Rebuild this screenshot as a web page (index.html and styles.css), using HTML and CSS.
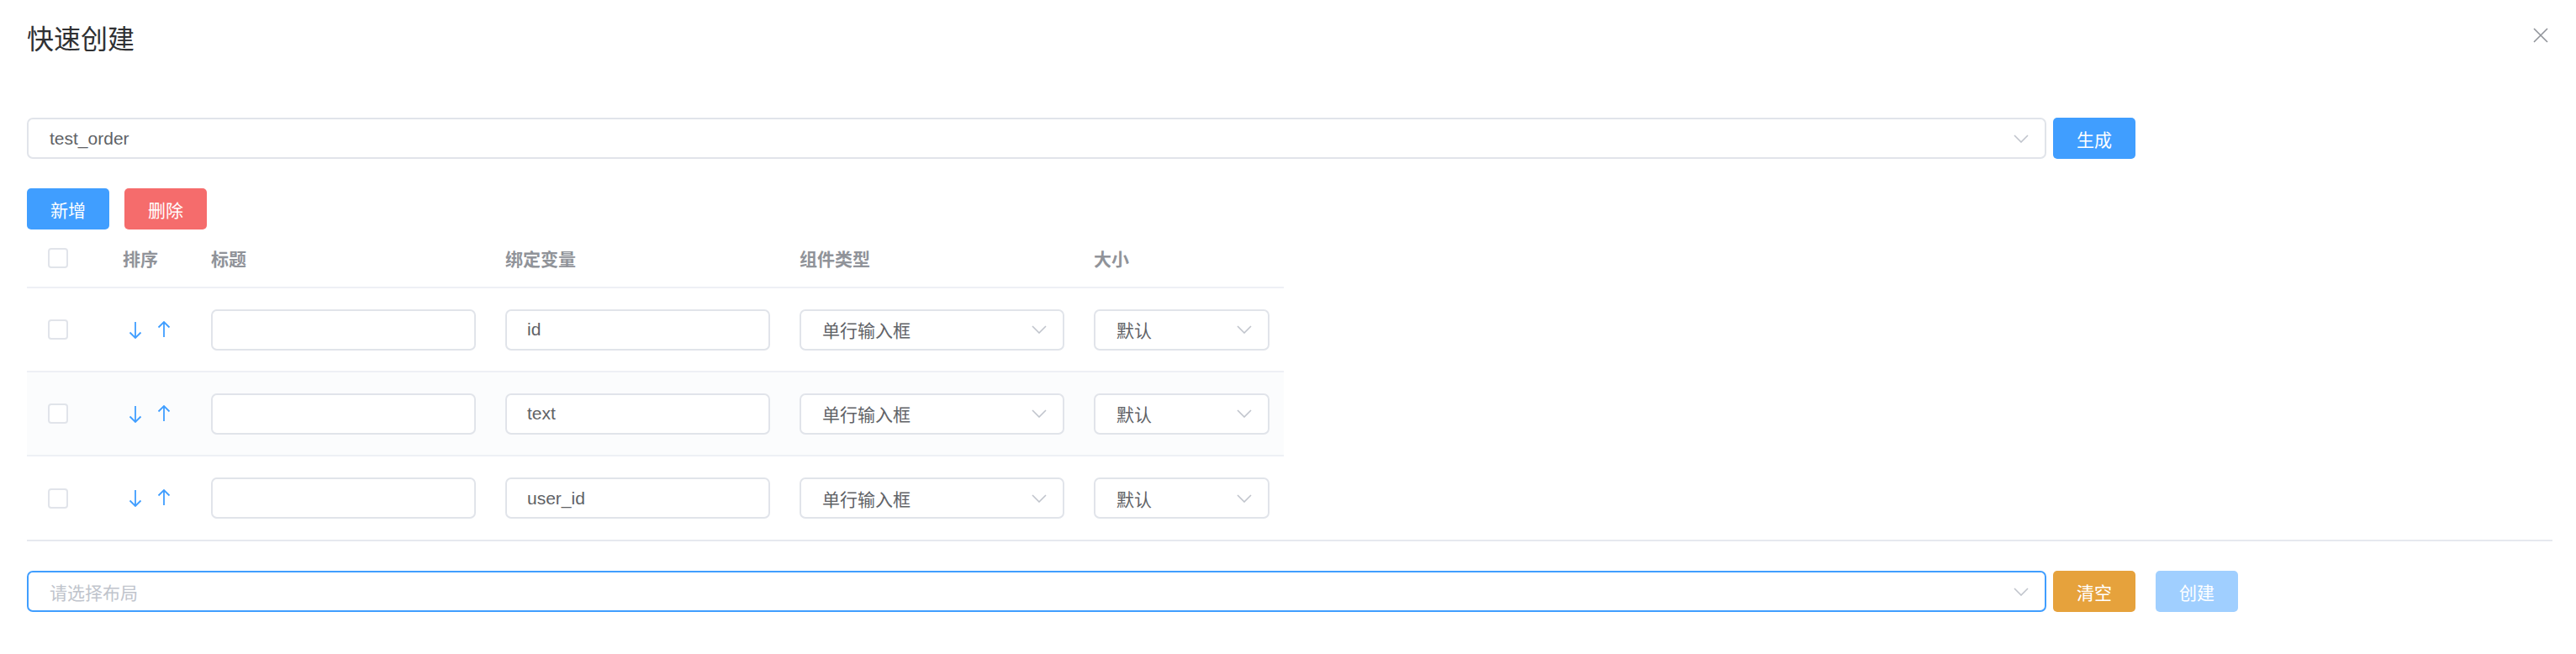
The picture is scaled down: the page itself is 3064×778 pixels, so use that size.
FILE: index.html
```html
<!DOCTYPE html>
<html lang="zh-CN">
<head>
<meta charset="utf-8">
<title>快速创建</title>
<link rel="stylesheet" href="styles.css">
</head>
<body>
<div class="dialog">
  <div class="dialog-header">
    <span class="dialog-title">快速创建</span>
    <button class="dialog-close" aria-label="关闭">
      <svg width="18" height="18" viewBox="0 0 18 18"><path d="M1 1L17 17M17 1L1 17" stroke="#909399" stroke-width="1.6" fill="none"/></svg>
    </button>
  </div>
  <div class="dialog-body">
    <div class="form-row">
      <div class="select select-wide">
        <span class="select-value">test_order</span>
        <svg class="chevron" width="18" height="10" viewBox="0 0 18 10"><path d="M1 1L9 9L17 1" stroke="#c0c4cc" stroke-width="1.6" fill="none"/></svg>
      </div>
      <button class="btn btn-primary btn-gap-s">生成</button>
    </div>

    <div class="toolbar">
      <button class="btn btn-primary">新增</button>
      <button class="btn btn-danger">删除</button>
    </div>

    <div class="grid">
      <div class="grid-row grid-head">
        <div class="cell cell-check"><span class="checkbox"></span></div>
        <div class="cell">排序</div>
        <div class="cell">标题</div>
        <div class="cell">绑定变量</div>
        <div class="cell">组件类型</div>
        <div class="cell">大小</div>
      </div>

      <div class="grid-row">
        <div class="cell cell-check"><span class="checkbox"></span></div>
        <div class="cell cell-sort">
          <svg class="arrow" width="16" height="21" viewBox="0 0 16 21"><path d="M8 1V20M1.5 13.5L8 20L14.5 13.5" stroke="#409eff" stroke-width="1.8" fill="none"/></svg>
          <svg class="arrow" width="16" height="21" viewBox="0 0 16 21"><path d="M8 19V1M1.5 7.5L8 1L14.5 7.5" stroke="#409eff" stroke-width="1.8" fill="none"/></svg>
        </div>
        <div class="cell"><div class="input"></div></div>
        <div class="cell"><div class="input">id</div></div>
        <div class="cell"><div class="select"><span class="select-value">单行输入框</span><svg class="chevron" width="18" height="10" viewBox="0 0 18 10"><path d="M1 1L9 9L17 1" stroke="#c0c4cc" stroke-width="1.6" fill="none"/></svg></div></div>
        <div class="cell"><div class="select select-size"><span class="select-value">默认</span><svg class="chevron" width="18" height="10" viewBox="0 0 18 10"><path d="M1 1L9 9L17 1" stroke="#c0c4cc" stroke-width="1.6" fill="none"/></svg></div></div>
      </div>

      <div class="grid-row grid-row-hover">
        <div class="cell cell-check"><span class="checkbox"></span></div>
        <div class="cell cell-sort">
          <svg class="arrow" width="16" height="21" viewBox="0 0 16 21"><path d="M8 1V20M1.5 13.5L8 20L14.5 13.5" stroke="#409eff" stroke-width="1.8" fill="none"/></svg>
          <svg class="arrow" width="16" height="21" viewBox="0 0 16 21"><path d="M8 19V1M1.5 7.5L8 1L14.5 7.5" stroke="#409eff" stroke-width="1.8" fill="none"/></svg>
        </div>
        <div class="cell"><div class="input"></div></div>
        <div class="cell"><div class="input">text</div></div>
        <div class="cell"><div class="select"><span class="select-value">单行输入框</span><svg class="chevron" width="18" height="10" viewBox="0 0 18 10"><path d="M1 1L9 9L17 1" stroke="#c0c4cc" stroke-width="1.6" fill="none"/></svg></div></div>
        <div class="cell"><div class="select select-size"><span class="select-value">默认</span><svg class="chevron" width="18" height="10" viewBox="0 0 18 10"><path d="M1 1L9 9L17 1" stroke="#c0c4cc" stroke-width="1.6" fill="none"/></svg></div></div>
      </div>

      <div class="grid-row grid-row-last">
        <div class="cell cell-check"><span class="checkbox"></span></div>
        <div class="cell cell-sort">
          <svg class="arrow" width="16" height="21" viewBox="0 0 16 21"><path d="M8 1V20M1.5 13.5L8 20L14.5 13.5" stroke="#409eff" stroke-width="1.8" fill="none"/></svg>
          <svg class="arrow" width="16" height="21" viewBox="0 0 16 21"><path d="M8 19V1M1.5 7.5L8 1L14.5 7.5" stroke="#409eff" stroke-width="1.8" fill="none"/></svg>
        </div>
        <div class="cell"><div class="input"></div></div>
        <div class="cell"><div class="input">user_id</div></div>
        <div class="cell"><div class="select"><span class="select-value">单行输入框</span><svg class="chevron" width="18" height="10" viewBox="0 0 18 10"><path d="M1 1L9 9L17 1" stroke="#c0c4cc" stroke-width="1.6" fill="none"/></svg></div></div>
        <div class="cell"><div class="select select-size"><span class="select-value">默认</span><svg class="chevron" width="18" height="10" viewBox="0 0 18 10"><path d="M1 1L9 9L17 1" stroke="#c0c4cc" stroke-width="1.6" fill="none"/></svg></div></div>
      </div>
    </div>

    <div class="divider"></div>

    <div class="form-row">
      <div class="select select-wide select-focus">
        <span class="select-placeholder">请选择布局</span>
        <svg class="chevron" width="18" height="10" viewBox="0 0 18 10"><path d="M1 1L9 9L17 1" stroke="#c0c4cc" stroke-width="1.6" fill="none"/></svg>
      </div>
      <button class="btn btn-warning btn-gap-s">清空</button>
      <button class="btn btn-disabled btn-gap-l">创建</button>
    </div>
  </div>
</div>
</body>
</html>
```

FILE: styles.css
```css
html, body {
  margin: 0;
  padding: 0;
  background: #ffffff;
}

body {
  font-family: "Liberation Sans", "Noto Sans CJK SC", sans-serif;
  color: #606266;
}

.dialog {
  width: 3064px;
}

.dialog-header {
  position: relative;
  padding: 26px 32px 0 32px;
  height: 42px;
}

.dialog-title {
  font-size: 32px;
  line-height: 42px;
  color: #303133;
  font-family: "Liberation Sans", "Noto Sans CJK SC", sans-serif;
}

.dialog-close {
  position: absolute;
  top: 33px;
  right: 33px;
  width: 18px;
  height: 18px;
  padding: 0;
  border: 0;
  background: transparent;
  display: flex;
}

.dialog-body {
  padding: 72px 28px 40px 32px;
}

.form-row {
  display: flex;
  align-items: center;
}

.select {
  box-sizing: border-box;
  height: 49px;
  border: 2px solid #e1e4ea;
  border-radius: 7px;
  background: #fff;
  display: flex;
  align-items: center;
  padding: 0 19px 0 25px;
  font-size: 21px;
  color: #606266;
  width: 100%;
}

.select-wide {
  width: 2402px;
  flex: none;
}

.select-focus {
  border-color: #409eff;
}

.select-size {
  width: 210px;
}

.select-value,
.select-placeholder {
  flex: 1;
  white-space: nowrap;
}

.select-placeholder {
  color: #c0c4cc;
}

.chevron {
  flex: none;
  display: block;
}

.btn {
  box-sizing: border-box;
  height: 49px;
  width: 98px;
  border: 0;
  border-radius: 5px;
  font-family: "Liberation Sans", "Noto Sans CJK SC", sans-serif;
  font-size: 21px;
  color: #fff;
  padding: 0;
  flex: none;
}

.btn-primary { background: #409eff; }
.btn-danger { background: #f56c6c; }
.btn-warning { background: #e6a23c; }
.btn-disabled { background: #a0cfff; }

.btn-gap-s { margin-left: 8px; }
.btn-gap-l { margin-left: 24px; }

.toolbar {
  display: flex;
  gap: 18px;
  margin-top: 35px;
}

.grid {
  width: 1495px;
}

.grid-row {
  display: grid;
  grid-template-columns: 96.5px 105px 350px 350px 350px 243.5px;
  height: 98px;
  border-bottom: 2px solid #eef0f5;
  align-items: center;
}

.grid-head {
  height: 68px;
  font-size: 21px;
  font-weight: bold;
  color: #909399;
}

.grid-row-hover {
  background: #fbfcfd;
}

.grid-row-last {
  border-bottom: 0;
  height: 99px;
}

.cell {
  padding: 0 17.5px;
  display: flex;
  align-items: center;
  box-sizing: border-box;
  min-width: 0;
}

.cell-check {
  padding-left: 25px;
}

.cell-sort {
  padding-left: 24px;
  gap: 18px;
}

.arrow {
  display: block;
}

.checkbox {
  box-sizing: border-box;
  width: 24px;
  height: 24px;
  border: 2px solid #e1e4ea;
  border-radius: 4px;
  background: #fff;
  display: block;
}

.input {
  box-sizing: border-box;
  width: 100%;
  height: 49px;
  border: 2px solid #e1e4ea;
  border-radius: 7px;
  background: #fff;
  padding: 0 24px;
  font-size: 21px;
  color: #606266;
  display: flex;
  align-items: center;
}

.divider {
  height: 2px;
  background: #e6e9ef;
}

.divider + .form-row {
  margin-top: 35px;
}
```
